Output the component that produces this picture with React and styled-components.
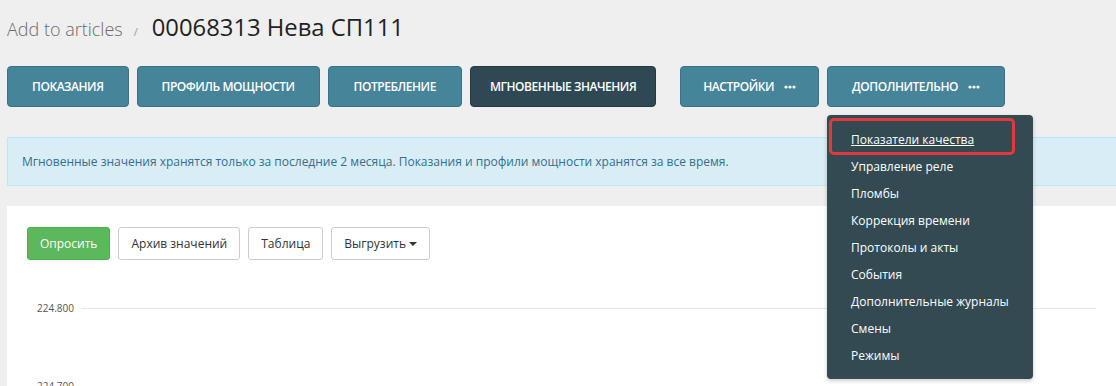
import styled, { createGlobalStyle } from 'styled-components'

const Global = createGlobalStyle`
  body {
    margin: 0;
    background: #efefef;
    font-family: "Open Sans", "Liberation Sans", sans-serif;
    overflow: hidden;
  }
`

const Page = styled.div`
  width: 1116px;
  height: 386px;
  overflow: hidden;
  padding-left: 7px;
  box-sizing: border-box;
`

const Header = styled.div`
  display: flex;
  align-items: baseline;
  height: 66px;
  padding-top: 11px;
  box-sizing: border-box;
`
const Crumb = styled.span`
  font-size: 18px;
  font-weight: 300;
  color: #6b6b6b;
`
const Sep = styled.span`
  font-size: 11px;
  color: #999;
  margin: 0 14px 0 11px;
`
const Title = styled.h1`
  margin: 0;
  font-size: 23.8px;
  font-weight: 400;
  color: #222;
`

const Tabs = styled.div`
  display: flex;
  gap: 8px;
  height: 41px;
`
const Tab = styled.div`
  display: flex;
  align-items: center;
  gap: 10px;
  height: 41px;
  padding: 0 ${p => p.$px ?? 24}px;
  box-sizing: border-box;
  border-radius: 4px;
  border: 1px solid ${p => (p.$active ? '#26393f' : '#3b7186')};
  background: ${p => (p.$active ? '#2f4954' : '#468499')};
  color: #fff;
  font-size: 12px;
  font-weight: 600;
  letter-spacing: -0.45px;
  margin-left: ${p => p.$ml || 0}px;
  position: relative;
`

function Dots() {
  return (
    <svg width="12" height="4" viewBox="0 0 12 4">
      <circle cx="2" cy="2" r="1.6" fill="#fff" />
      <circle cx="6" cy="2" r="1.6" fill="#fff" />
      <circle cx="10" cy="2" r="1.6" fill="#fff" />
    </svg>
  )
}

const Menu = styled.ul`
  position: absolute;
  left: -1px;
  top: 48px;
  width: 206px;
  margin: 0;
  padding: 11px 0 10px;
  list-style: none;
  background: #334a52;
  border-radius: 4px;
  z-index: 5;
  box-shadow: 0 2px 4px rgba(0, 0, 0, 0.2);
`
const Item = styled.li`
  height: 27px;
  display: flex;
  align-items: center;
  padding-left: 24px;
  font-size: 12px;
  font-weight: 400;
  letter-spacing: 0;
  color: #fff;
  text-decoration: ${p => (p.$hl ? 'underline' : 'none')};
  position: relative;
`
const Highlight = styled.span`
  position: absolute;
  left: 2px;
  top: -8px;
  width: 186px;
  height: 37px;
  border: 3px solid #e2393f;
  border-radius: 5px;
  box-sizing: border-box;
`

const Alert = styled.div`
  margin-top: 30px;
  height: 49px;
  display: flex;
  align-items: center;
  padding-left: 14px;
  background: #d9edf7;
  border: 1px solid #bce8f1;
  border-right: none;
  color: #31708f;
  font-size: 12px;
  box-sizing: border-box;
`

const Panel = styled.div`
  margin-top: 20px;
  background: #fff;
  height: 200px;
  padding: 21px 20px 0;
`
const Toolbar = styled.div`
  display: flex;
  gap: 8px;
`
const Btn = styled.div`
  height: 33px;
  display: flex;
  align-items: center;
  gap: 3px;
  padding: 0 12px;
  box-sizing: border-box;
  border-radius: 3px;
  font-size: 12px;
  border: 1px solid ${p => (p.$primary ? '#4cae4c' : '#ccc')};
  background: ${p => (p.$primary ? '#5cb85c' : '#fff')};
  color: ${p => (p.$primary ? '#fff' : '#333')};
`
const Caret = styled.span`
  width: 0;
  height: 0;
  border-left: 4px solid transparent;
  border-right: 4px solid transparent;
  border-top: 4px solid #333;
`

const Chart = styled.div`
  margin-top: 40px;
`
const Tick = styled.div`
  display: flex;
  align-items: center;
  height: 16px;
  margin-bottom: 62px;
  padding-left: 10px;
  font-size: 10px;
  color: #555;
`
const Grid = styled.span`
  flex: 1;
  height: 1px;
  background: #e6e6e6;
  margin-left: 7px;
`

const menu = [
  'Показатели качества',
  'Управление реле',
  'Пломбы',
  'Коррекция времени',
  'Протоколы и акты',
  'События',
  'Дополнительные журналы',
  'Смены',
  'Режимы',
]

export default function App() {
  return (
    <Page>
      <Global />
      <Header>
        <Crumb>Add to articles</Crumb>
        <Sep>/</Sep>
        <Title>00068313 Нева СП111</Title>
      </Header>
      <Tabs>
        <Tab>ПОКАЗАНИЯ</Tab>
        <Tab>ПРОФИЛЬ МОЩНОСТИ</Tab>
        <Tab $px={25}>ПОТРЕБЛЕНИЕ</Tab>
        <Tab $active $px={19}>МГНОВЕННЫЕ ЗНАЧЕНИЯ</Tab>
        <Tab $ml={16} $px={22}>НАСТРОЙКИ <Dots /></Tab>
        <Tab $px={24}>
          ДОПОЛНИТЕЛЬНО <Dots />
          <Menu>
            {menu.map((m, i) => (
              <Item key={m} $hl={i === 0}>
                {i === 0 && <Highlight />}
                {m}
              </Item>
            ))}
          </Menu>
        </Tab>
      </Tabs>
      <Alert>
        Мгновенные значения хранятся только за последние 2 месяца. Показания и профили мощности хранятся за все время.
      </Alert>
      <Panel>
        <Toolbar>
          <Btn $primary>Опросить</Btn>
          <Btn>Архив значений</Btn>
          <Btn>Таблица</Btn>
          <Btn>Выгрузить <Caret /></Btn>
        </Toolbar>
        <Chart>
          <Tick>224.800<Grid /></Tick>
          <Tick>224.700<Grid /></Tick>
        </Chart>
      </Panel>
    </Page>
  )
}
